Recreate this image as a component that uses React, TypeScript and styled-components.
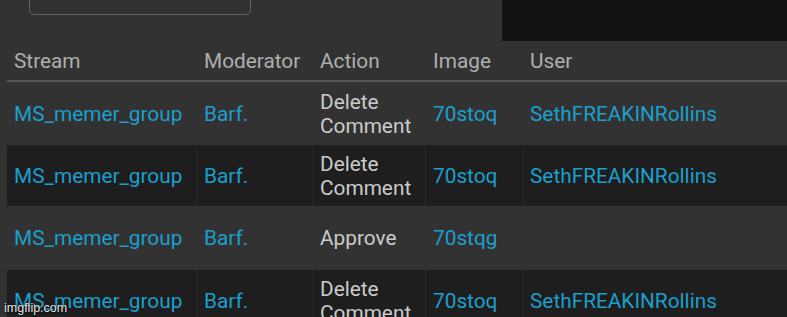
import React from "react";
import styled, { createGlobalStyle } from "styled-components";

const GlobalStyle = createGlobalStyle`
  body {
    margin: 0;
    background-color: #323232;
    font-family: Roboto, "Liberation Sans", sans-serif;
    overflow: hidden;
  }
`;

const Page = styled.div`
  position: relative;
  width: 787px;
  height: 317px;
  overflow: hidden;
  background-color: #323232;
`;

const TopBar = styled.div`
  display: flex;
  height: 41px;
  align-items: flex-start;
`;

const SearchBox = styled.div`
  width: 220px;
  height: 30px;
  margin-top: -17px;
  margin-left: 29px;
  border: 1.5px solid #626262;
  border-radius: 5px;
`;

const Preview = styled.div`
  margin-left: auto;
  width: 285px;
  height: 41px;
  background-color: #121212;
`;

const Table = styled.div`
  margin-left: 7px;
  display: flex;
  flex-direction: column;
`;

const Row = styled.div<{ $dark?: boolean; $height: number }>`
  display: grid;
  grid-template-columns: 190px 116px 113px 97px 1fr;
  height: ${(p) => p.$height}px;
  background-color: ${(p) => (p.$dark ? "#1e1e1e" : "transparent")};
`;

const HeaderRow = styled(Row)`
  border-bottom: 2px solid #555555;
  box-sizing: border-box;
`;

const Cell = styled.div<{ $dark?: boolean; $last?: boolean }>`
  display: flex;
  align-items: center;
  padding-left: 7px;
  font-size: 20.8px;
  line-height: 24px;
  white-space: nowrap;
  border-right: ${(p) => (p.$dark && !p.$last ? "1px solid #272727" : "none")};
`;

const HeadText = styled.span`
  color: #aeaeae;
  padding-top: 1px;
`;

const LinkText = styled.span`
  color: #1c9fcc;
`;

const ActionText = styled.span`
  color: #cbcbcb;
`;

const Watermark = styled.div`
  position: absolute;
  left: 4px;
  bottom: 2px;
  font-family: "Liberation Sans", Arial, sans-serif;
  font-size: 12.5px;
  color: #e8e8e8;
  text-shadow: 0 0 2px #000, 0 0 1px #000;
`;

const headers = ["Stream", "Moderator", "Action", "Image", "User"];

const rows = [
  { action: "Delete\nComment", image: "70stoq", user: "SethFREAKINRollins", h: 63 },
  { action: "Delete\nComment", image: "70stoq", user: "SethFREAKINRollins", h: 61 },
  { action: "Approve", image: "70stqg", user: "", h: 64 },
  { action: "Delete\nComment", image: "70stoq", user: "SethFREAKINRollins", h: 62 },
];

const App = () => {
  return (
    <Page>
      <GlobalStyle />
      <TopBar>
        <SearchBox />
        <Preview />
      </TopBar>
      <Table>
        <HeaderRow $height={41}>
          {headers.map((h) => (
            <Cell key={h}>
              <HeadText>{h}</HeadText>
            </Cell>
          ))}
        </HeaderRow>
        {rows.map((r, i) => {
          const dark = i % 2 === 1;
          return (
            <Row key={i} $dark={dark} $height={r.h}>
              <Cell $dark={dark}>
                <LinkText>MS_memer_group</LinkText>
              </Cell>
              <Cell $dark={dark}>
                <LinkText>Barf.</LinkText>
              </Cell>
              <Cell $dark={dark}>
                <ActionText>
                  {r.action.split("\n").map((line, j) => (
                    <React.Fragment key={j}>
                      {j > 0 && <br />}
                      {line}
                    </React.Fragment>
                  ))}
                </ActionText>
              </Cell>
              <Cell $dark={dark}>
                <LinkText>{r.image}</LinkText>
              </Cell>
              <Cell $dark={dark} $last>
                <LinkText>{r.user}</LinkText>
              </Cell>
            </Row>
          );
        })}
      </Table>
      <Watermark>imgflip.com</Watermark>
    </Page>
  );
};

export default App;
